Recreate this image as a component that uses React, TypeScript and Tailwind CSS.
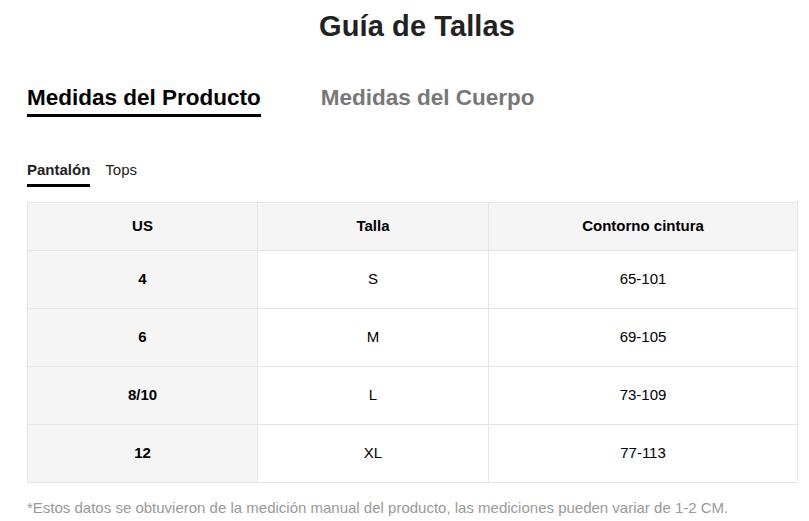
const rows = [
  { us: '4', talla: 'S', cintura: '65-101' },
  { us: '6', talla: 'M', cintura: '69-105' },
  { us: '8/10', talla: 'L', cintura: '73-109' },
  { us: '12', talla: 'XL', cintura: '77-113' },
];

export default function App() {
  return (
    <div className="w-[809px] h-[521px] bg-white pl-[27px] pr-[12px] font-['Liberation_Sans',Arial,sans-serif] overflow-hidden">
      <div className="h-[52px] flex items-center justify-center pl-[10px]">
        <h1 className="text-[29px] leading-[32px] font-bold text-[#222] tracking-[0.1px]">Guía de Tallas</h1>
      </div>

      <div className="flex gap-[60px] mt-[32px]">
        <button className="text-[22.5px] leading-[28px] font-bold text-black pb-[2px] border-b-[3px] border-black">
          Medidas del Producto
        </button>
        <button className="text-[22.5px] leading-[28px] font-bold text-[#777] pb-[2px] border-b-[3px] border-transparent">
          Medidas del Cuerpo
        </button>
      </div>

      <div className="flex gap-[15px] mt-[44px]">
        <button className="text-[15px] leading-[18px] font-bold text-[#222] pb-[5px] border-b-[3px] border-black">
          Pantalón
        </button>
        <button className="text-[15px] leading-[18px] text-[#222] pb-[5px] border-b-[3px] border-transparent">
          Tops
        </button>
      </div>

      <table className="w-[770px] mt-[15px] border-collapse text-[15px] text-black table-fixed">
        <colgroup>
          <col className="w-[230px]" />
          <col className="w-[231px]" />
          <col className="w-[309px]" />
        </colgroup>
        <thead>
          <tr className="h-[48px] bg-[#f5f5f5]">
            <th className="border border-[#e5e5e5] font-bold">US</th>
            <th className="border border-[#e5e5e5] font-bold">Talla</th>
            <th className="border border-[#e5e5e5] font-bold">Contorno cintura</th>
          </tr>
        </thead>
        <tbody>
          {rows.map((r) => (
            <tr key={r.us} className="h-[58px]">
              <td className="border border-[#e5e5e5] bg-[#f5f5f5] text-center font-bold">{r.us}</td>
              <td className="border border-[#e5e5e5] text-center">{r.talla}</td>
              <td className="border border-[#e5e5e5] text-center">{r.cintura}</td>
            </tr>
          ))}
        </tbody>
      </table>

      <p className="mt-[16px] text-[15px] leading-[18px] text-[#999]">
        *Estos datos se obtuvieron de la medición manual del producto, las mediciones pueden variar de 1-2 CM.
      </p>
    </div>
  );
}
